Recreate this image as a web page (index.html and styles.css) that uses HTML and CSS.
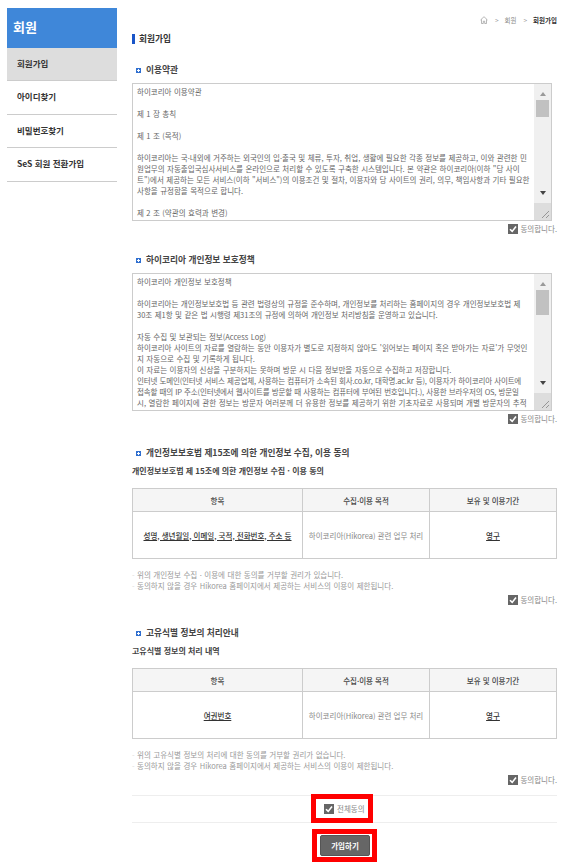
FILE: index.html
```html
<!DOCTYPE html>
<html lang="ko">
<head>
    <meta charset="UTF-8">
    <meta name="viewport" content="width=device-width, initial-scale=1.0">
    <title>회원가입</title>
    <link rel="stylesheet" href="styles.css">
</head>
<body>
<div class="wrap">
    <aside class="side">
        <h2 class="side-title">회원</h2>
        <ul class="side-menu">
            <li class="on">회원가입</li>
            <li>아이디찾기</li>
            <li>비밀번호찾기</li>
            <li>SeS 회원 전환가입</li>
        </ul>
    </aside>

    <main class="content">
        <div class="crumb">
            <svg class="home" width="8" height="8" viewBox="0 0 8 8"><path d="M.5 4 4 .7 7.5 4M1.5 3.4V7.5h1.8V5.2h1.4v2.3h1.8V3.4" fill="none" stroke="#999" stroke-width=".7"/></svg>
            <span class="sep">&gt;</span>
            <span>회원</span>
            <span class="sep">&gt;</span>
            <b>회원가입</b>
        </div>
        <h1 class="page-title">회원가입</h1>

        <h3 class="sec-title first"><svg class="plus" width="5" height="5" viewBox="0 0 5 5"><rect width="5" height="5" fill="#2f6fd0"/><path d="M2.5 1v3M1 2.5h3" stroke="#fff"/></svg>이용약관</h3>
        <div class="terms">
            <div class="terms-text">
                <p>하이코리아 이용약관</p>
                <br>
                <p>제 1 장 총칙</p>
                <br>
                <p>제 1 조 (목적)</p>
                <br>
                <p>하이코리아는 국·내외에 거주하는 외국인의 입·출국 및 체류, 투자, 취업, 생활에 필요한 각종 정보를 제공하고, 이와 관련한 민원업무의 자동출입국심사서비스를 온라인으로 처리할 수 있도록 구축한 시스템입니다. 본 약관은 하이코리아(이하 "당 사이트")에서 제공하는 모든 서비스(이하 "서비스")의 이용조건 및 절차, 이용자와 당 사이트의 권리, 의무, 책임사항과 기타 필요한 사항을 규정함을 목적으로 합니다.</p>
                <br>
                <p>제 2 조 (약관의 효력과 변경)</p>
            </div>
            <div class="scroll">
                <div class="track">
                    <span class="arrow up"></span>
                    <span class="thumb"></span>
                    <span class="arrow down"></span>
                </div>
                <div class="grip"><svg width="17" height="17" viewBox="0 0 17 17"><path d="M8 15 15 8M12 15l3-3" stroke="#777" stroke-width=".7"/></svg></div>
            </div>
        </div>
        <div class="agree"><span class="check"><svg width="10" height="10" viewBox="0 0 10 10"><path d="M2 5.2 4.2 7.4 8 2.6" fill="none" stroke="#fff" stroke-width="1.6"/></svg></span>동의합니다.</div>

        <h3 class="sec-title second"><svg class="plus" width="5" height="5" viewBox="0 0 5 5"><rect width="5" height="5" fill="#2f6fd0"/><path d="M2.5 1v3M1 2.5h3" stroke="#fff"/></svg>하이코리아 개인정보 보호정책</h3>
        <div class="terms">
            <div class="terms-text">
                <p>하이코리아 개인정보 보호정책</p>
                <br>
                <p>하이코리아는 개인정보보호법 등 관련 법령상의 규정을 준수하며, 개인정보를 처리하는 홈페이지의 경우 개인정보보호법 제<br>30조 제1항 및 같은 법 시행령 제31조의 규정에 의하여 개인정보 처리방침을 운영하고 있습니다.</p>
                <br>
                <p>자동 수집 및 보관되는 정보(Access Log)</p>
                <p>하이코리아 사이트의 자료를 열람하는 동안 이용자가 별도로 지정하지 않아도 '읽어보는 페이지 혹은 받아가는 자료'가 무엇인지 자동으로 수집 및 기록하게 됩니다.</p>
                <p>이 자료는 이용자의 신상을 구분하지는 못하며 방문 시 다음 정보만을 자동으로 수집하고 저장합니다.</p>
                <p class="squeeze">인터넷 도메인(인터넷 서비스 제공업체, 사용하는 컴퓨터가 소속된 회사.co.kr, 대학명.ac.kr 등), 이용자가 하이코리아 사이트에<br>접속할 때의 IP 주소(인터넷에서 웹사이트를 방문할 때 사용하는 컴퓨터에 부여된 번호입니다.), 사용한 브라우저의 OS, 방문일<br><span class="loose">시, 열람한 페이지에 관한 정보는 방문자 여러분께 더 유용한 정보를 제공하기 위한 기초자료로 사용되며 개별 방문자의 추적</span></p>
            </div>
            <div class="scroll">
                <div class="track">
                    <span class="arrow up"></span>
                    <span class="thumb long"></span>
                    <span class="arrow down"></span>
                </div>
                <div class="grip"><svg width="17" height="17" viewBox="0 0 17 17"><path d="M8 15 15 8M12 15l3-3" stroke="#777" stroke-width=".7"/></svg></div>
            </div>
        </div>
        <div class="agree"><span class="check"><svg width="10" height="10" viewBox="0 0 10 10"><path d="M2 5.2 4.2 7.4 8 2.6" fill="none" stroke="#fff" stroke-width="1.6"/></svg></span>동의합니다.</div>

        <h3 class="sec-title third"><svg class="plus" width="5" height="5" viewBox="0 0 5 5"><rect width="5" height="5" fill="#2f6fd0"/><path d="M2.5 1v3M1 2.5h3" stroke="#fff"/></svg>개인정보보호법 제15조에 의한 개인정보 수집, 이용 동의</h3>
        <h4 class="sub-title">개인정보보호법 제 15조에 의한 개인정보 수집 · 이용 동의</h4>
        <table class="info">
            <tr><th class="c1">항목</th><th class="c2">수집·이용 목적</th><th>보유 및 이용기간</th></tr>
            <tr><td><u>성명, 생년월일, 이메일, 국적, 전화번호, 주소 등</u></td><td class="plain">하이코리아(Hikorea) 관련 업무 처리</td><td><u>영구</u></td></tr>
        </table>
        <ul class="notes">
            <li>위의 개인정보 수집 · 이용에 대한 동의를 거부할 권리가 있습니다.</li>
            <li>동의하지 않을 경우 Hikorea 홈페이지에서 제공하는 서비스의 이용이 제한됩니다.</li>
        </ul>
        <div class="agree tight"><span class="check"><svg width="10" height="10" viewBox="0 0 10 10"><path d="M2 5.2 4.2 7.4 8 2.6" fill="none" stroke="#fff" stroke-width="1.6"/></svg></span>동의합니다.</div>

        <h3 class="sec-title fourth"><svg class="plus" width="5" height="5" viewBox="0 0 5 5"><rect width="5" height="5" fill="#2f6fd0"/><path d="M2.5 1v3M1 2.5h3" stroke="#fff"/></svg>고유식별 정보의 처리안내</h3>
        <h4 class="sub-title">고유식별 정보의 처리 내역</h4>
        <table class="info">
            <tr><th class="c1">항목</th><th class="c2">수집·이용 목적</th><th>보유 및 이용기간</th></tr>
            <tr><td><u>여권번호</u></td><td class="plain">하이코리아(Hikorea) 관련 업무 처리</td><td><u>영구</u></td></tr>
        </table>
        <ul class="notes">
            <li>위의 고유식별 정보의 처리에 대한 동의를 거부할 권리가 없습니다.</li>
            <li>동의하지 않을 경우 Hikorea 홈페이지에서 제공하는 서비스의 이용이 제한됩니다.</li>
        </ul>
        <div class="agree tight"><span class="check"><svg width="10" height="10" viewBox="0 0 10 10"><path d="M2 5.2 4.2 7.4 8 2.6" fill="none" stroke="#fff" stroke-width="1.6"/></svg></span>동의합니다.</div>

        <div class="all-row">
            <div class="all-mark"><span class="check"><svg width="10" height="10" viewBox="0 0 10 10"><path d="M2 5.2 4.2 7.4 8 2.6" fill="none" stroke="#fff" stroke-width="1.6"/></svg></span>전체동의</div>
        </div>
        <div class="btn-row">
            <div class="btn-mark"><button type="button">가입하기</button></div>
        </div>
    </main>
</div>
</body>
</html>
```

FILE: styles.css
```css
/* Base */
* {
    box-sizing: border-box;
}
html, body {
    height: 864px;
    overflow: hidden;
}
body {
    margin: 0;
    font-family: "Noto Sans CJK KR", "Noto Sans", sans-serif;
    font-size: 7.5px;
    line-height: 11px;
    color: #666;
    background: #fff;
}
h1, h2, h3, h4, p, ul {
    margin: 0;
    padding: 0;
}
ul {
    list-style: none;
}
.wrap {
    display: flex;
    align-items: flex-start;
}

/* Left menu */
.side {
    width: 110px;
    margin: 8px 0 0 7px;
    flex-shrink: 0;
}
.side-title {
    height: 40px;
    padding-left: 6px;
    font-size: 13px;
    line-height: 38px;
    font-weight: 700;
    color: #fff;
    background: #3f87d9;
}
.side-menu li {
    height: 33.4px;
    padding-left: 10px;
    font-size: 8.5px;
    line-height: 31px;
    font-weight: 700;
    color: #333;
    border-bottom: 1px solid #ccc;
}
.side-menu li.on {
    background: #ddd;
}

/* Main column */
.content {
    width: 425px;
    margin-left: 15px;
}
.crumb {
    display: flex;
    justify-content: flex-end;
    align-items: center;
    gap: 5px;
    height: 10px;
    margin-top: 15px;
    font-size: 6.5px;
    color: #888;
}
.crumb b {
    color: #333;
}
.crumb .sep {
    margin: 0 1px 0 2px;
    color: #999;
}
.page-title {
    margin-top: 9px;
    padding-left: 7px;
    font-size: 8.7px;
    line-height: 10px;
    font-weight: 700;
    color: #333;
    border-left: 3px solid #1a55c8;
    text-indent: -3px;
}
.sec-title {
    padding-left: 4px;
    font-size: 8.7px;
    line-height: 12px;
    font-weight: 700;
    color: #444;
}
.sec-title.first {
    margin-top: 20px;
}
.sec-title.second {
    margin-top: 20px;
}
.sec-title.third {
    margin-top: 23px;
}
.sec-title.fourth {
    margin-top: 22px;
}
.plus {
    margin-right: 5px;
}
.sub-title {
    margin-top: 6px;
    font-size: 8px;
    line-height: 12px;
    font-weight: 700;
    color: #444;
}

/* Scrolling text boxes */
.terms {
    display: flex;
    width: 420px;
    height: 138px;
    margin-top: 7px;
    border: 1px solid #ccc;
    overflow: hidden;
}
.terms-text {
    flex: 1;
    padding: 2px 3px 0 4px;
    overflow: hidden;
    color: #666;
    word-spacing: .35px;
}
.squeeze {
    letter-spacing: -.17px;
}
.loose {
    letter-spacing: .05px;
}
.scroll {
    display: flex;
    flex-direction: column;
    width: 17px;
    flex-shrink: 0;
}
.track {
    flex: 1;
    position: relative;
    display: flex;
    flex-direction: column;
    align-items: center;
    background: #f0f0f0;
}
.thumb {
    width: 13px;
    height: 17px;
    margin-top: 4px;
    background: #c1c1c1;
}
.thumb.long {
    height: 25px;
}
.arrow {
    width: 0;
    height: 0;
    border-left: 3.5px solid transparent;
    border-right: 3.5px solid transparent;
}
.arrow.up {
    margin-top: 8px;
    border-bottom: 4px solid #999;
}
.arrow.down {
    margin-top: auto;
    margin-bottom: 8px;
    border-top: 4px solid #444;
}
.grip {
    height: 17px;
    background: #ddd;
}
.grip svg {
    display: block;
}

/* Agree checkbox */
.agree {
    display: flex;
    justify-content: flex-end;
    align-items: center;
    gap: 2px;
    height: 11px;
    margin-top: 2px;
    color: #888;
}
.agree.tight {
    margin-top: 3px;
}
.check {
    display: block;
    width: 10px;
    height: 10px;
    background: #666;
}
.check svg {
    display: block;
}

/* Tables */
.info {
    width: 425px;
    margin-top: 11px;
    border-collapse: collapse;
    table-layout: fixed;
    text-align: center;
}
.info th, .info td {
    border: 1px solid #ccc;
    padding: 0;
}
.info th {
    height: 23px;
    font-weight: 500;
    color: #444;
    background: #f5f5f5;
}
.info td {
    height: 47px;
    font-weight: 500;
    color: #333;
}
.info td.plain {
    font-weight: 400;
    color: #888;
}
.info .c1 {
    width: 170px;
}
.info .c2 {
    width: 127px;
}
.notes {
    margin-top: 10px;
    color: #999;
    word-spacing: .4px;
}
.notes li::before {
    content: "-";
    display: inline-block;
    width: 5px;
    color: #ddd;
}

/* Bottom actions */
.all-row {
    display: flex;
    justify-content: center;
    height: 28px;
    margin-top: 10px;
    border-top: 1px solid #eee;
    border-bottom: 1px solid #eee;
}
.all-mark {
    display: flex;
    align-items: center;
    gap: 3px;
    width: 62px;
    height: 29px;
    margin: -2px 5px 0 0;
    padding-left: 8px;
    color: #888;
    border: 5px solid #f00;
    background: #fff;
}
.btn-row {
    display: flex;
    justify-content: center;
    margin-top: 6px;
}
.btn-mark {
    padding: 1px 2px 1px 3px;
    border: 5px solid #f00;
}
button {
    display: block;
    width: 50px;
    height: 21px;
    padding: 0;
    font: 700 7.5px "Noto Sans CJK KR", sans-serif;
    color: #fff;
    background: #666;
    border: 1px solid #555;
    border-radius: 2px;
}
```
